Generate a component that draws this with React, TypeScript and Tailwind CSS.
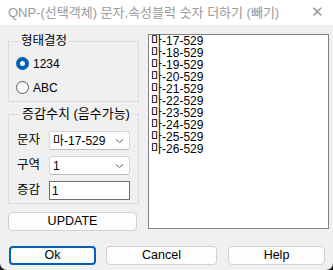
const items = Array.from({ length: 10 }, (_, i) => `마-${17 + i}-529`);

const font = { fontFamily: '"Liberation Sans", "Noto Sans CJK KR", sans-serif' };

const Chevron = () => (
  <svg width="9" height="6" viewBox="0 0 9 6" className="shrink-0">
    <path d="M1 1.5 L4.5 4.5 L8 1.5" fill="none" stroke="#606060" strokeWidth="1" />
  </svg>
);

const Combo = ({ value }: { value: string }) => (
  <div className="flex h-[19px] w-[81px] items-center justify-between rounded-[3px] border border-[#d5d5d5] border-b-[#bcbcbc] bg-white pl-[3px] pr-[5px] text-[12px] leading-none text-black">
    <span>{value}</span>
    <Chevron />
  </div>
);

const Radio = ({ checked, label }: { checked?: boolean; label: string }) => (
  <div className="flex items-center gap-[4px]">
    {checked ? (
      <div className="flex h-[13px] w-[13px] items-center justify-center rounded-full bg-[#005fb8]">
        <div className="h-[5px] w-[5px] rounded-full bg-white" />
      </div>
    ) : (
      <div className="h-[13px] w-[13px] rounded-full border border-[#5c5c5c] bg-[#f9f9f9]" />
    )}
    <span className="text-[12px] leading-none text-black">{label}</span>
  </div>
);

const Button = ({ label, primary, w }: { label: string; primary?: boolean; w: string }) => (
  <div
    className={`flex h-[19px] items-center justify-center rounded-[4px] bg-[#fdfdfd] text-[12.5px] text-black ${w} ${
      primary ? "border-2 border-[#005fb8]" : "border border-[#d0d0d0]"
    }`}
  >
    {label}
  </div>
);

export default function App() {
  return (
    <div className="h-[270px] w-[333px] bg-[#1c1c1c]" style={font}>
      <div className="flex h-[270px] w-[333px] flex-col overflow-hidden rounded-b-[7px] bg-[#f0f0f0]">
        {/* Title bar */}
        <div className="flex h-[25px] items-center justify-between bg-white pl-[8px] pr-[9px] text-[13px] text-[#9a9a9a]">
          <span>QNP-(선택객체) 문자,속성블럭 숫자 더하기 (빼기)</span>
          <span className="text-[15px] font-light">✕</span>
        </div>

        <div className="flex gap-[9px] pl-[8px] pt-[9px]">
          {/* Left column */}
          <div className="flex w-[131px] flex-col">
            <fieldset className="h-[68px] border border-[#dcdcdc] pl-[7px]">
              <legend className="ml-[3px] px-[2px] text-[12.5px] leading-[14px] text-black">형태결정</legend>
              <div className="flex flex-col gap-[11px] pt-[9px]">
                <Radio checked label="1234" />
                <Radio label="ABC" />
              </div>
            </fieldset>

            <fieldset className="mt-[5px] h-[97px] border border-[#dcdcdc] pl-[8px]">
              <legend className="ml-[3px] px-[2px] text-[13px] leading-[14px] text-black">증감수치 (음수가능)</legend>
              <div className="flex flex-col gap-[6px] pt-[10px]">
                <div className="flex items-center">
                  <span className="w-[32px] text-[12.5px] leading-none">문자</span>
                  <Combo value="마-17-529" />
                </div>
                <div className="flex items-center">
                  <span className="w-[32px] text-[12.5px] leading-none">구역</span>
                  <Combo value="1" />
                </div>
                <div className="flex items-center">
                  <span className="w-[32px] text-[12.5px] leading-none">증감</span>
                  <div className="flex h-[19px] w-[81px] items-center border border-[#6e6e6e] bg-white pl-[2px] text-[12px] leading-none">
                    1
                  </div>
                </div>
              </div>
            </fieldset>

            <div className="mt-[8px] flex">
              <Button label="UPDATE" w="w-[129px]" />
            </div>
          </div>

          {/* List box */}
          <div className="h-[195px] w-[181px] border border-[#828282] bg-white pl-[2px] text-[12px] leading-[12px] text-black">
            {items.map((t) => (
              <div key={t}>{t}</div>
            ))}
          </div>
        </div>

        <div className="mt-[15px] flex pl-[9px]">
          <Button label="Ok" primary w="w-[87px]" />
          <div className="w-[10px]" />
          <Button label="Cancel" w="w-[111px]" />
          <div className="w-[11px]" />
          <Button label="Help" w="w-[97px]" />
        </div>
      </div>
    </div>
  );
}
